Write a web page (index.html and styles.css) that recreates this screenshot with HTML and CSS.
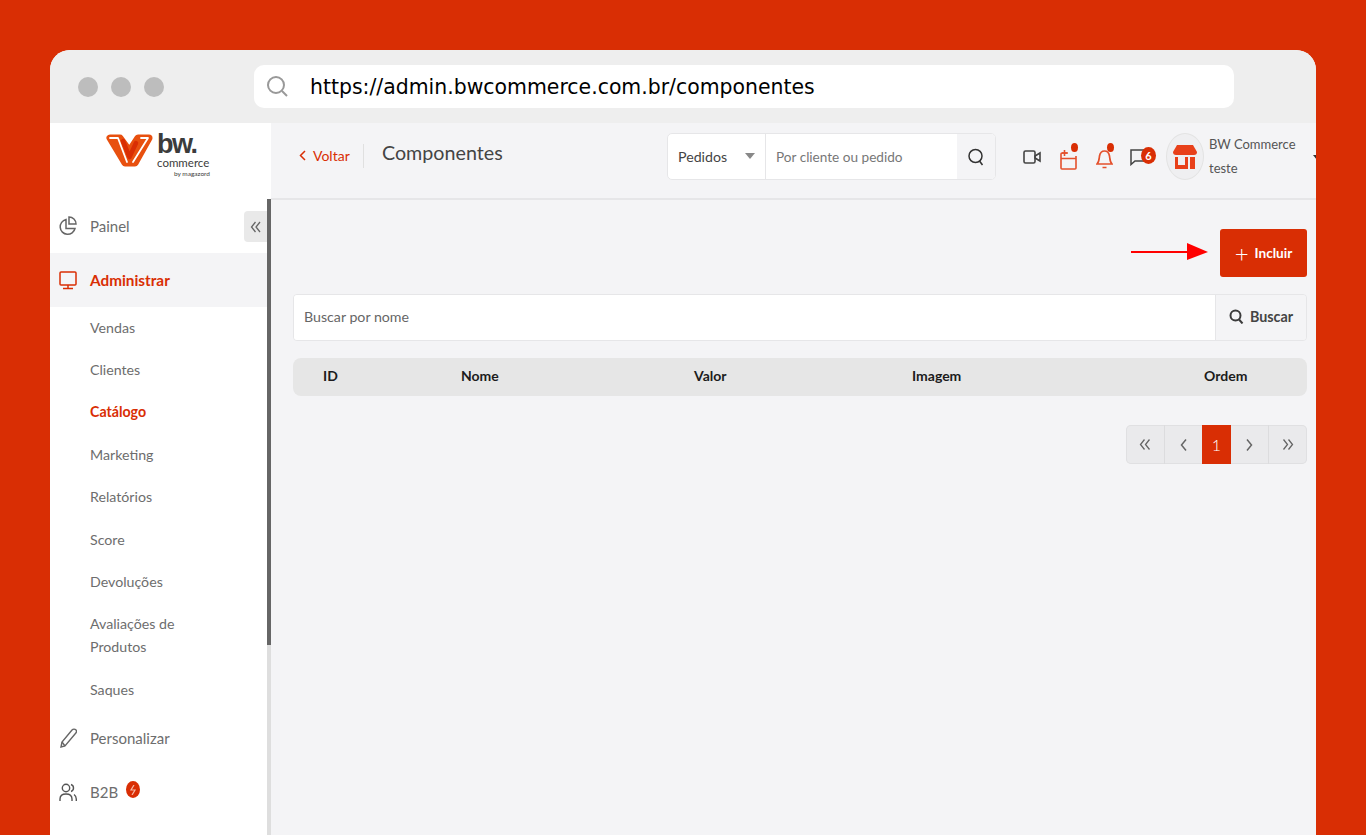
FILE: index.html
```html
<!DOCTYPE html>
<html>
<head>
    <link rel="stylesheet" href="styles.css">
</head>
<body>
    <div class="window">
        <div class="browser-bar">
            <div class="dots"><span></span><span></span><span></span></div>
            <div class="url-bar">
                <svg class="url-icon" width="24" height="24" viewBox="0 0 24 24" fill="none"><circle cx="10" cy="10" r="8" stroke="#999" stroke-width="2"/><path d="M16 16l5 5" stroke="#999" stroke-width="2"/></svg>
                <span>https://admin.bwcommerce.com.br/componentes</span>
            </div>
        </div>
        <div class="app">
            <aside class="sidebar">
                <div class="logo">
                    <svg width="49" height="36" viewBox="0 0 49 36" fill="none" stroke-linejoin="round" stroke-linecap="round"><path d="M5 6H15L24.500 19 33 6H44L30 31H20Z" fill="#e8500f" stroke="#e8500f" stroke-width="7"/><path d="M5 6H13L22 30" stroke="#fff" stroke-width="1.800"/><path d="M28 30L43 6H36" stroke="#fff" stroke-width="1.800"/><path d="M18 9L24.500 25 31 11" stroke="#d92e04" stroke-width="4.500"/><path d="M22 3.500L24.500 9 28 3.500" stroke="#fff" stroke-width="2.500"/></svg>
                    <div class="logo-text">
                        <div class="logo-bw">bw.</div>
                        <div class="logo-commerce">commerce</div>
                        <div class="logo-by">by magazord</div>
                    </div>
                </div>
                <nav class="menu">
                    <a class="menu-item">
                        <svg width="18" height="20" viewBox="0 0 18 20" fill="none" stroke="#666" stroke-width="1.5"><path d="M7 3.500a7.500 7.500 0 1 0 9 9H7z"/><path d="M10 1v7h7a7 7 0 0 0-7-7z"/></svg>
                        Painel
                    </a>
                    <a class="menu-item active">
                        <svg width="18" height="20" viewBox="0 0 18 20" fill="none" stroke="#d92e04" stroke-width="1.5"><rect x="1" y="2" width="16" height="13" rx="1"/><path d="M9 15v3M4 18.500h10"/></svg>
                        Administrar
                    </a>
                    <a class="sub-item">Vendas</a>
                    <a class="sub-item">Clientes</a>
                    <a class="sub-item current">Catálogo</a>
                    <a class="sub-item">Marketing</a>
                    <a class="sub-item">Relatórios</a>
                    <a class="sub-item">Score</a>
                    <a class="sub-item">Devoluções</a>
                    <a class="sub-item">Avaliações de Produtos</a>
                    <a class="sub-item">Saques</a>
                    <a class="menu-item">
                        <svg width="18" height="20" viewBox="0 0 18 20" fill="none" stroke="#666" stroke-width="1.4"><path d="M2 19l1-5L13 2c1-1 3-1 4 0s0 3-1 4L6 18z"/><path d="M3 14l3 4"/></svg>
                        Personalizar
                    </a>
                    <a class="menu-item">
                        <svg width="18" height="20" viewBox="0 0 18 20" fill="none" stroke="#555" stroke-width="1.4"><circle cx="7" cy="6" r="3.700"/><path d="M1 19v-2c0-3 2-5 6-5s6 2 6 5v2"/><path d="M12 2.500a3.700 3.700 0 0 1 0 7M15 12.500c1.500 1 2.300 2.500 2.300 4.500v2"/></svg>
                        B2B
                        <span class="bolt"><svg width="8" height="10" viewBox="0 0 8 10" fill="none" stroke="#f6b9a8" stroke-width="1.2"><path d="M5 0L2 5h4L3 10"/></svg></span>
                    </a>
                </nav>
                <button class="collapse">
                    <svg width="12" height="12" viewBox="0 0 12 12" fill="none" stroke="#666" stroke-width="1.300"><path d="M5.500 1L1.500 6l4 5M10 1L6 6l4 5"/></svg>
                </button>
                <div class="scroll-track"></div>
                <div class="scroll-thumb"></div>
            </aside>
            <div class="content">
                <header class="topbar">
                    <a class="back">
                        <svg width="7" height="11" viewBox="0 0 7 11" fill="none" stroke="#d92e04" stroke-width="1.500"><path d="M6 1L1.500 5.500 6 10"/></svg>
                        Voltar
                    </a>
                    <h1 class="page-title">Componentes</h1>
                    <div class="top-search">
                        <div class="top-select">Pedidos<i class="caret"></i></div>
                        <div class="top-input">Por cliente ou pedido</div>
                        <div class="top-btn">
                            <svg width="18" height="18" viewBox="0 0 18 18" fill="none" stroke="#333" stroke-width="1.500"><circle cx="8.500" cy="8" r="6.500"/><path d="M12.500 13l3 4"/></svg>
                        </div>
                    </div>
                    <div class="top-icons">
                        <svg width="18" height="16" viewBox="0 0 18 16" fill="none" stroke="#444" stroke-width="1.600"><rect x="1" y="2" width="11" height="12" rx="1.500"/><path d="M12 7l5-3v8l-5-3z"/></svg>
                        <span class="dot-icon">
                            <svg width="17" height="26" viewBox="0 0 17 26" fill="none" stroke="#e4502c" stroke-width="1.600"><path d="M8 9H2a1 1 0 0 0-1 1v14a1 1 0 0 0 1 1h13a1 1 0 0 0 1-1V12"/><path d="M1 14.500h15M4.500 6v6M2 9h5"/></svg>
                            <i class="red-dot"></i>
                        </span>
                        <span class="dot-icon">
                            <svg width="17" height="26" viewBox="0 0 17 26" fill="none" stroke="#e4502c" stroke-width="1.700"><path d="M1 20c2-2 2-4 2.500-8 .5-3 2-5 5-5s4.500 2 5 5c.5 4 .5 6 2.500 8z"/><path d="M6.500 23.500h4"/></svg>
                            <i class="red-dot"></i>
                        </span>
                        <span class="chat-icon">
                            <svg width="17" height="18" viewBox="0 0 17 18" fill="none" stroke="#444" stroke-width="1.500"><path d="M1 2h15v11H5l-4 3.500z"/></svg>
                            <i class="chat-badge">6</i>
                        </span>
                    </div>
                    <div class="avatar">
                        <svg width="24" height="24" viewBox="0 0 24 24"><path d="M4 0h16l4 7c0 2-1 3-3 3H3C1 10 0 9 0 7z" fill="#e8401a"/><path d="M2 12h3v8h7v-8h3v12H2zM17 12h5v12h-5z" fill="#e8401a"/></svg>
                    </div>
                    <div class="user-name">BW Commerce<br>teste</div>
                    <i class="user-caret"></i>
                </header>
                <main class="main">
                    <div class="actions">
                        <div class="arrow"></div>
                        <button class="add-btn"><span class="plus">+</span>Incluir</button>
                    </div>
                    <div class="search-row">
                        <div class="search-input">Buscar por nome</div>
                        <button class="search-btn">
                            <svg width="15" height="15" viewBox="0 0 15 15" fill="none" stroke="#3c3c3c" stroke-width="2"><circle cx="6.500" cy="6.500" r="5"/><path d="M10 10.500l3.500 4"/></svg>
                            Buscar
                        </button>
                    </div>
                    <div class="table-head">
                        <span>ID</span>
                        <span>Nome</span>
                        <span>Valor</span>
                        <span>Imagem</span>
                        <span>Ordem</span>
                    </div>
                    <div class="pagination">
                        <a class="page-first"><svg width="12" height="11" viewBox="0 0 12 11" fill="none" stroke="#666" stroke-width="1.300"><path d="M5.500.5L1.500 5.500l4 5M10.500.5l-4 5 4 5"/></svg></a>
                        <a class="page-prev"><svg width="7" height="12" viewBox="0 0 7 12" fill="none" stroke="#666" stroke-width="1.500"><path d="M6 .5L1.500 6 6 11.500"/></svg></a>
                        <a class="page-now">1</a>
                        <a class="page-next"><svg width="7" height="12" viewBox="0 0 7 12" fill="none" stroke="#666" stroke-width="1.500"><path d="M1 .5L5.500 6 1 11.500"/></svg></a>
                        <a class="page-last"><svg width="12" height="11" viewBox="0 0 12 11" fill="none" stroke="#666" stroke-width="1.300"><path d="M1.500.5l4 5-4 5M6.500.5l4 5-4 5"/></svg></a>
                    </div>
                </main>
            </div>
        </div>
    </div>
</body>
</html>
```

FILE: styles.css
```css
* {
    box-sizing: border-box;
}

html, body {
    height: 100%;
}

body {
    margin: 0;
    padding: 50px 50px 0;
    overflow: hidden;
    background-color: #d92e04;
    font-family: Lato, sans-serif;
    color: #666;
}

.window {
    height: 785px;
    border-radius: 20px 20px 0 0;
    overflow: hidden;
    display: flex;
    flex-direction: column;
    background-color: #f4f4f6;
}

/* Browser bar */
.browser-bar {
    height: 73px;
    flex: none;
    background-color: #eeeeee;
    display: flex;
    align-items: center;
    padding: 0 82px 0 28px;
}

.dots {
    display: flex;
    gap: 13px;
    width: 176px;
    margin-top: 1px;
}

.dots span {
    width: 20px;
    height: 20px;
    border-radius: 50%;
    background-color: #bdbdbd;
}

.url-bar {
    width: 980px;
    height: 43px;
    background-color: #fff;
    border-radius: 10px;
    display: flex;
    align-items: center;
    padding-left: 12px;
    font-family: "DejaVu Sans", sans-serif;
    font-size: 20.430px;
    color: #000;
}

.url-icon {
    margin-right: 20px;
}

.app {
    flex: 1;
    display: flex;
    min-height: 0;
}

/* Sidebar */
.sidebar {
    width: 221px;
    flex: none;
    background-color: #fff;
    position: relative;
}

.logo {
    height: 76px;
    display: flex;
    align-items: flex-start;
    padding: 9px 0 0 55px;
    gap: 3px;
}

.logo-text {
    color: #3c3c3c;
    line-height: 1;
}

.logo-bw {
    font-family: "Liberation Sans", sans-serif;
    font-weight: 700;
    font-size: 27px;
    letter-spacing: -1.500px;
    line-height: 25px;
    width: 53px;
}

.logo-commerce {
    font-size: 11.500px;
    line-height: 12px;
}

.logo-by {
    font-size: 6.500px;
    line-height: 10px;
    text-align: right;
}

.menu {
    padding-right: 4px;
}

.menu-item {
    height: 54px;
    display: flex;
    align-items: center;
    padding: 0 0 1px 9px;
    font-size: 15px;
    color: #6d6d6d;
}

.menu-item > svg {
    margin-right: 13px;
    flex: none;
}

.menu-item.active {
    background-color: #f4f4f6;
    color: #d92e04;
    font-weight: 700;
    font-size: 15.300px;
}

.sub-item {
    display: block;
    padding: 8.700px 50px 10.700px 40px;
    font-size: 14.200px;
    line-height: 23px;
    color: #6d6d6d;
}

.sub-item.current {
    color: #d92e04;
    font-weight: 700;
}

.bolt {
    width: 14px;
    height: 17px;
    border-radius: 50%;
    background-color: #d92e04;
    display: flex;
    align-items: center;
    justify-content: center;
    margin: -4px 0 0 8px;
}

.collapse {
    position: absolute;
    top: 88px;
    right: 4px;
    width: 23px;
    height: 31px;
    border: none;
    padding: 0;
    border-radius: 4px 0 0 4px;
    background-color: #e9e9e9;
    display: flex;
    align-items: center;
    justify-content: center;
}

.scroll-track,
.scroll-thumb {
    position: absolute;
    top: 76px;
    right: 0;
    width: 4px;
}

.scroll-track {
    bottom: 0;
    background-color: #dedede;
}

.scroll-thumb {
    height: 446px;
    background-color: #666;
}

/* Header */
.content {
    flex: 1;
    min-width: 0;
    display: flex;
    flex-direction: column;
}

.topbar {
    height: 77px;
    flex: none;
    border-bottom: 2px solid #e6e6e8;
    display: flex;
    align-items: center;
    padding: 0 0 0 28px;
    overflow: hidden;
}

.back {
    display: flex;
    align-items: center;
    gap: 7px;
    color: #d92e04;
    font-size: 14px;
    width: 65px;
    height: 24px;
    flex: none;
    border-right: 1px solid #e0e0e0;
    margin: -10px 18px 0 0;
}

.page-title {
    margin: -17px 0 0 0;
    font-size: 19.700px;
    font-weight: 400;
    color: #444;
    width: 285px;
    flex: none;
}

.top-search {
    width: 329px;
    height: 47px;
    flex: none;
    display: flex;
    background-color: #fff;
    border: 1px solid #e6e6e8;
    border-radius: 5px;
    margin-top: -8px;
    overflow: hidden;
}

.top-select {
    width: 98px;
    border-right: 1px solid #e6e6e8;
    display: flex;
    align-items: center;
    justify-content: space-between;
    padding: 0 10px 1px;
    font-size: 14.200px;
    color: #444;
}

.caret {
    width: 0;
    height: 0;
    border-left: 5px solid transparent;
    border-right: 5px solid transparent;
    border-top: 6px solid #888;
}

.top-input {
    flex: 1;
    display: flex;
    align-items: center;
    padding-left: 10px;
    font-size: 13.600px;
    color: #777;
}

.top-btn {
    width: 38px;
    background-color: #f4f4f6;
    display: flex;
    align-items: center;
    justify-content: center;
}

.top-icons {
    display: flex;
    align-items: center;
    margin: -8px 0 0 27px;
    width: 143px;
    flex: none;
    gap: 19px;
}

.dot-icon, .chat-icon {
    position: relative;
    display: flex;
}

.chat-icon {
    margin-left: -2px;
}

.red-dot {
    position: absolute;
    top: -1px;
    right: -1px;
    width: 7px;
    height: 9px;
    border-radius: 50%;
    background-color: #d92e04;
}

.chat-badge {
    position: absolute;
    top: -1px;
    left: 11px;
    width: 15px;
    height: 17px;
    border-radius: 50%;
    background-color: #d92e04;
    color: #fff;
    font-size: 11px;
    font-style: normal;
    font-weight: 700;
    text-align: center;
    line-height: 17px;
}

.avatar {
    width: 38px;
    height: 47px;
    flex: none;
    border-radius: 50%;
    border: 1px solid #e3e3e3;
    background-color: #efeff1;
    margin-top: -8px;
    display: flex;
    align-items: center;
    justify-content: center;
}

.user-name {
    margin: -9px 0 0 5px;
    font-size: 13px;
    line-height: 24px;
    color: #555;
    white-space: nowrap;
}

.user-caret {
    margin: -7px 0 0 17px;
    flex: none;
    width: 0;
    height: 0;
    border-left: 4px solid transparent;
    border-right: 4px solid transparent;
    border-top: 5px solid #333;
}

/* Main */
.main {
    flex: 1;
    padding: 29px 9px 0 22px;
}

.actions {
    height: 48px;
    position: relative;
    display: flex;
    justify-content: flex-end;
}

.arrow {
    position: absolute;
    top: 22px;
    left: 838px;
    width: 60px;
    height: 2px;
    background-color: #f00;
}

.arrow::after {
    content: "";
    position: absolute;
    top: -8px;
    left: 56px;
    border-left: 21px solid #f00;
    border-top: 9px solid transparent;
    border-bottom: 8px solid transparent;
}

.add-btn {
    width: 87px;
    height: 48px;
    border: none;
    border-radius: 3px;
    background-color: #d92e04;
    color: #fff;
    font-family: Lato, sans-serif;
    font-size: 13.600px;
    font-weight: 700;
    display: flex;
    align-items: center;
    justify-content: center;
    gap: 6px;
}

.plus {
    font-size: 24px;
    font-weight: 300;
    line-height: 1;
}

.search-row {
    height: 47px;
    margin-top: 17px;
    display: flex;
    border: 1px solid #e6e6e8;
    border-radius: 4px;
    overflow: hidden;
}

.search-input {
    flex: 1;
    background-color: #fff;
    display: flex;
    align-items: center;
    padding: 0 0 3px 10px;
    font-size: 14.200px;
    color: #666;
}

.search-btn {
    width: 91px;
    border: none;
    border-left: 1px solid #e6e6e8;
    background-color: #f4f4f6;
    display: flex;
    align-items: center;
    justify-content: center;
    gap: 6px;
    padding: 0 0 2px;
    font-family: Lato, sans-serif;
    font-size: 14.300px;
    font-weight: 700;
    color: #444;
}

.table-head {
    height: 38px;
    margin-top: 17px;
    background-color: #e6e6e6;
    border-radius: 8px;
    display: grid;
    grid-template-columns: 138px 233px 218px 292px 1fr;
    align-items: center;
    padding: 0 0 3px 30px;
    font-size: 14px;
    font-weight: 700;
    color: #1c1c1c;
}

.pagination {
    width: 181px;
    height: 39px;
    margin: 29px 0 0 auto;
    display: grid;
    grid-template-columns: 38px 38px 29px 37px 1fr;
    background-color: #eaeaec;
    box-shadow: inset 0 0 0 1px #e0e0e2;
    border-radius: 5px;
    overflow: hidden;
}

.pagination a {
    display: flex;
    align-items: center;
    justify-content: center;
}

.page-prev, .page-last {
    border-left: 1px solid #dcdcde;
}

.pagination .page-now {
    background-color: #d92e04;
    color: #fff;
    font-size: 16px;
    font-weight: 300;
}
```
